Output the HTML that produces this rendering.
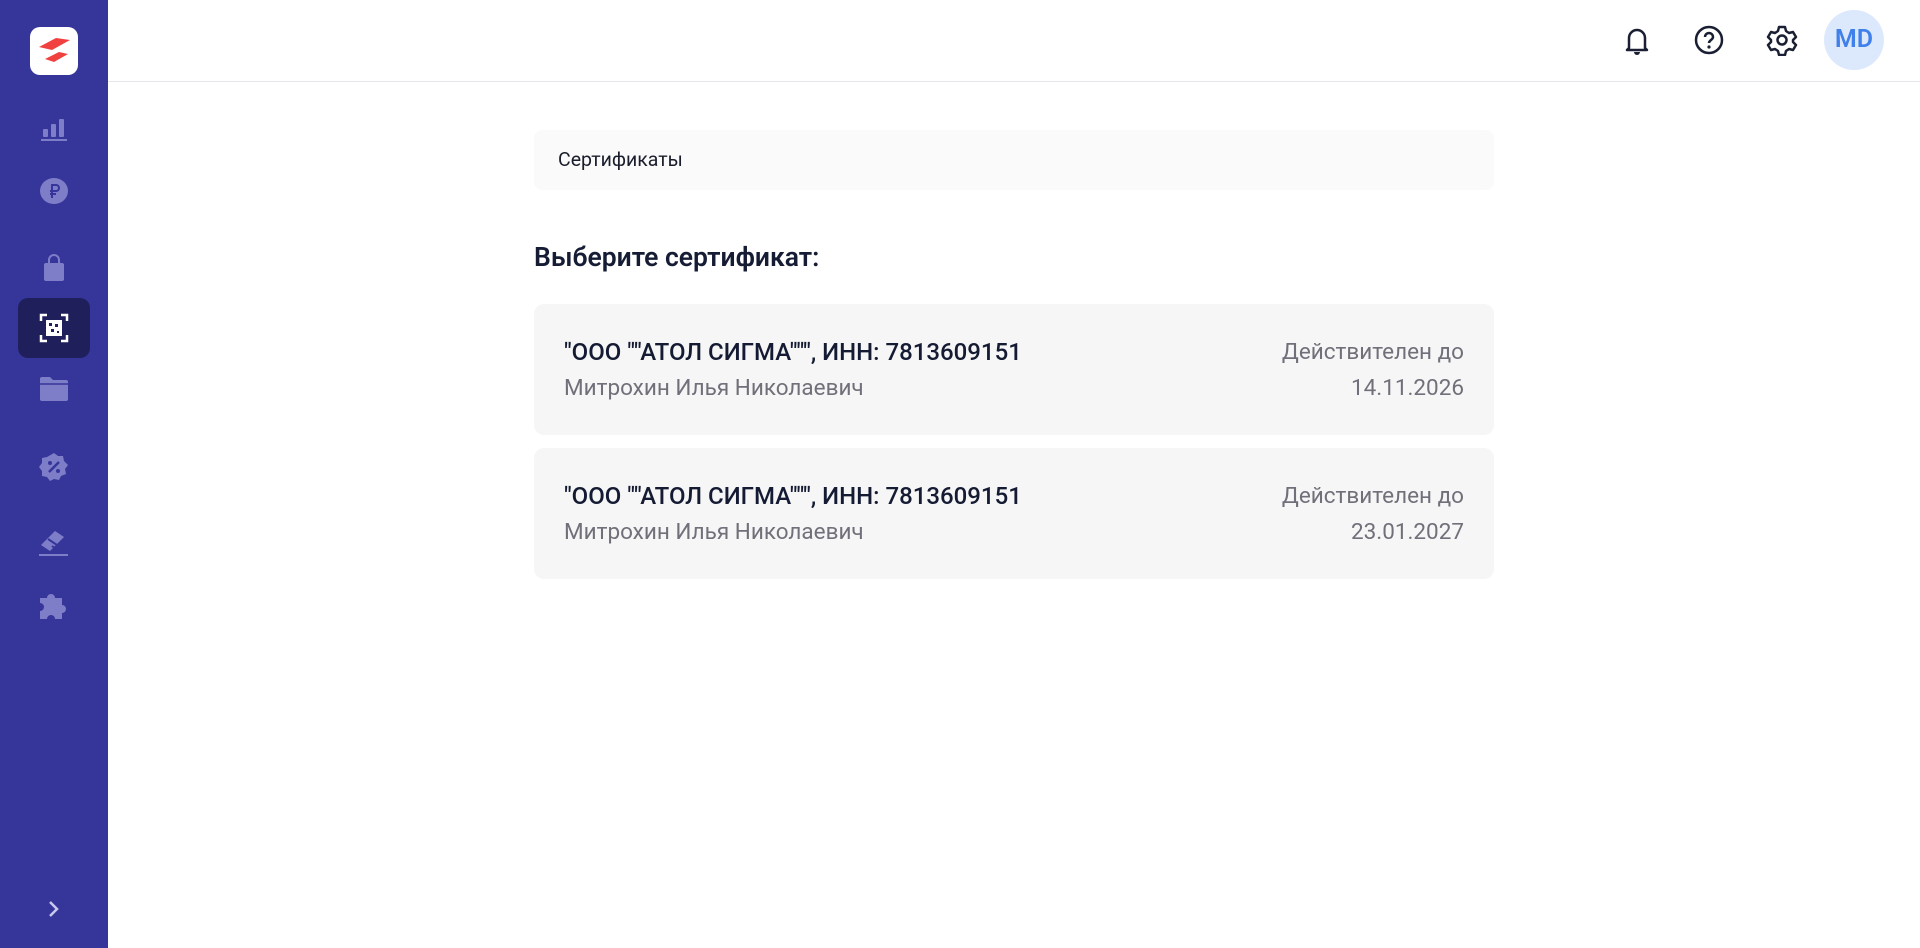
<!DOCTYPE html>
<html><head><meta charset="utf-8"><style>
*{margin:0;padding:0;box-sizing:border-box}
body{width:1920px;height:948px;overflow:hidden;background:#fff;font-family:"Roboto","Liberation Sans",sans-serif;position:relative}
.side{position:absolute;left:0;top:0;width:108px;height:948px;background:#36359a}
.logo{position:absolute;left:30px;top:27px;width:48px;height:48px;background:#fff;border-radius:10px}
.ic{position:absolute;left:54px;transform:translate(-50%,-50%)}
.active{position:absolute;left:18px;top:298px;width:72px;height:60px;background:#1f1f5c;border-radius:10px}
.hdr{position:absolute;left:108px;top:0;right:0;height:82px;border-bottom:1px solid #e6e6ea}
.crumb{position:absolute;left:534px;top:130px;width:960px;height:60px;background:#fafafa;border-radius:8px;font-size:19.5px;color:#1a1d2b;padding:0 0 0 24px;line-height:60px}
h2{position:absolute;left:534px;top:242px;font-size:26.5px;font-weight:600;color:#151c34}
.card{position:absolute;left:534px;width:960px;height:131px;background:#f6f6f6;border-radius:10px}
.t{position:absolute;left:30px;top:34px;font-size:24px;font-weight:500;color:#141b33;line-height:28px}
.s{position:absolute;left:30px;top:71px;font-size:22.5px;color:#70707a;line-height:26px}
.r1{position:absolute;right:30px;top:35px;font-size:22.5px;color:#70707a;line-height:26px}
.r2{position:absolute;right:30px;top:71px;font-size:22.5px;color:#70707a;line-height:26px}
.av{position:absolute;left:1824px;top:10px;width:60px;height:60px;border-radius:50%;background:#dce8fc;color:#3f80ea;font-size:25px;font-weight:600;text-align:center;line-height:60px}
</style></head><body>
<div class="side">
 <div class="logo"><svg width="48" height="48" viewBox="0 0 48 48"><path d="M9 20 L26 11 L40 13 L22 23 Z" fill="#f0403f"/><path d="M15 32 L29 25 L38 27 L24 35 Z" fill="#f0403f"/></svg></div>
 <svg class="ic" style="top:129px" width="28" height="24" viewBox="0 0 28 24"><rect x="3" y="12" width="5" height="8" rx="1" fill="#7e7ec8"/><rect x="11" y="7" width="5" height="13" rx="1" fill="#7e7ec8"/><rect x="19" y="2" width="5" height="18" rx="1" fill="#7e7ec8"/><rect x="1" y="22" width="26" height="2" fill="#7e7ec8"/></svg>
 <svg class="ic" style="top:191px" width="30" height="28" viewBox="0 0 30 28"><ellipse cx="15" cy="14" rx="14" ry="13" fill="#7e7ec8"/><path d="M13 7v14M13 8h4a3 3 0 010 6h-6M11 17h6" stroke="#36359a" stroke-width="2" fill="none"/></svg>
 <svg class="ic" style="top:268px" width="24" height="28" viewBox="0 0 24 28"><path d="M7 9V6a5 5 0 0110 0v3" stroke="#7e7ec8" stroke-width="2" fill="none"/><rect x="2" y="9" width="20" height="18" rx="2" fill="#7e7ec8"/></svg>
 <div class="active"></div>
 <svg class="ic" style="top:328px" width="30" height="30" viewBox="0 0 30 30"><path d="M2 8V2h6M22 2h6v6M28 22v6h-6M8 28H2v-6" stroke="#fff" stroke-width="2.5" fill="none"/><rect x="7" y="7" width="16" height="16" fill="#fff"/><rect x="10" y="10" width="3" height="3" fill="#1f1f5c"/><rect x="16" y="11" width="3" height="3" fill="#1f1f5c"/><rect x="12" y="16" width="3" height="3" fill="#1f1f5c"/><rect x="18" y="18" width="2" height="2" fill="#1f1f5c"/></svg>
 <svg class="ic" style="top:389px" width="30" height="26" viewBox="0 0 30 26"><path d="M1 3a2 2 0 012-2h8l3 3h13a2 2 0 012 2v17a2 2 0 01-2 2H3a2 2 0 01-2-2Z" fill="#7e7ec8"/><path d="M1 8h28" stroke="#36359a" stroke-width="1.5"/></svg>
 <svg class="ic" style="top:467px" width="30" height="30" viewBox="0 0 30 30"><path d="M15 1l4 3 5 0 1 5 4 4-3 4 1 5-5 2-2 4-5-1-4 2-3-4-5-1 0-5-3-4 3-4 0-5 5-1z" fill="#7e7ec8"/><path d="M10 20l10-10" stroke="#36359a" stroke-width="2.5"/><circle cx="11" cy="11" r="2" fill="#36359a"/><circle cx="19" cy="19" r="2" fill="#36359a"/></svg>
 <svg class="ic" style="top:542px" width="32" height="30" viewBox="0 0 32 30"><path d="M3 18L17 4l9 6-14 14z" fill="#7e7ec8"/><path d="M10 12l9 6M14 19l4 3" stroke="#36359a" stroke-width="2"/><rect x="1" y="27" width="29" height="2" fill="#7e7ec8"/></svg>
 <svg class="ic" style="top:605px" width="32" height="30" viewBox="0 0 32 30"><path d="M2 8h7a4 4 0 118 0h7v7a4 4 0 110 8v6H17a4 4 0 10-8 0H2v-8a4 4 0 100-8z" fill="#7e7ec8"/></svg>
 <svg class="ic" style="top:909px" width="14" height="20" viewBox="0 0 14 20"><path d="M3 3l7 7-7 7" stroke="#c9c9ee" stroke-width="2.5" fill="none"/></svg>
</div>
<div class="hdr"></div>
<svg style="position:absolute;left:1622px;top:24px" width="30" height="32" viewBox="0 0 30 32"><path d="M7 24V14a8 8 0 0116 0v10l2 2H5z" stroke="#1a1f33" stroke-width="2.5" fill="none" stroke-linejoin="round"/><path d="M12 28a3 3 0 006 0" fill="#1a1f33"/></svg>
<svg style="position:absolute;left:1693px;top:24px" width="32" height="32" viewBox="0 0 32 32"><circle cx="16" cy="16" r="13" stroke="#1a1f33" stroke-width="2.5" fill="none"/><path d="M12 13a4 4 0 118 0c0 3-4 3-4 6" stroke="#1a1f33" stroke-width="2.5" fill="none"/><circle cx="16" cy="23" r="1.6" fill="#1a1f33"/></svg>
<svg style="position:absolute;left:1766px;top:24px" width="32" height="32" viewBox="0 0 32 32"><path d="M13 3h6l1 4 3 2 4-1 3 5-3 3v2l3 3-3 5-4-1-3 2-1 4h-6l-1-4-3-2-4 1-3-5 3-3v-2l-3-3 3-5 4 1 3-2z" stroke="#1a1f33" stroke-width="2.5" fill="none" stroke-linejoin="round"/><circle cx="16" cy="16" r="4.5" stroke="#1a1f33" stroke-width="2.5" fill="none"/></svg>
<div class="av">MD</div>
<div class="crumb">Сертификаты</div>
<h2>Выберите сертификат:</h2>
<div class="card" style="top:304px"><div class="t">"ООО ""АТОЛ СИГМА""", ИНН: 7813609151</div><div class="s">Митрохин Илья Николаевич</div><div class="r1">Действителен до</div><div class="r2">14.11.2026</div></div>
<div class="card" style="top:448px"><div class="t">"ООО ""АТОЛ СИГМА""", ИНН: 7813609151</div><div class="s">Митрохин Илья Николаевич</div><div class="r1">Действителен до</div><div class="r2">23.01.2027</div></div>
</body></html>
